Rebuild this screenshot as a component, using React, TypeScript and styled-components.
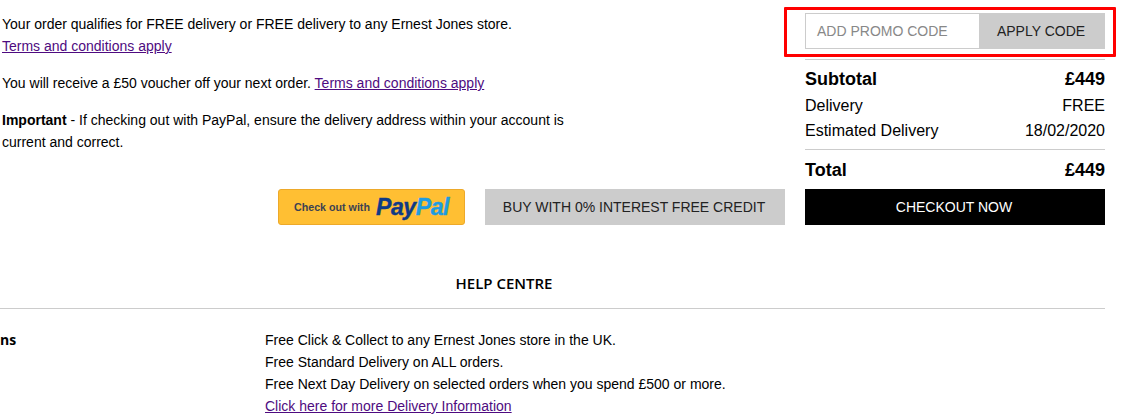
import React from 'react';
import styled, { createGlobalStyle } from 'styled-components';

const GlobalStyle = createGlobalStyle`
    html, body {
        margin: 0;
        padding: 0;
        background: #fff;
        overflow: hidden;
    }
    body {
        font-family: 'Liberation Sans', Arial, sans-serif;
        font-size: 14px;
        color: #000;
    }
`;

const Page = styled.div`
    width: 1105px;
    height: 414px;
`;

const Top = styled.div`
    display: flex;
    justify-content: space-between;
    padding-top: 13px;
`;

const Notes = styled.div`
    width: 580px;
    padding-left: 2px;
    line-height: 22px;
`;

const Note = styled.p`
    margin: 0 0 15px;
`;

const Terms = styled.a`
    color: #4e0b80;
    text-decoration: underline;
`;

const Summary = styled.div`
    position: relative;
    width: 300px;
`;

const Highlight = styled.div`
    position: absolute;
    left: -21px;
    top: -6px;
    width: 326px;
    height: 44px;
    border: 3px solid #f00;
    border-radius: 1px;
`;

const Promo = styled.div`
    display: flex;
    height: 36px;
`;

const PromoInput = styled.div`
    flex: 1;
    display: flex;
    align-items: center;
    padding-left: 11px;
    border: 1px solid #ccc;
    border-right: 0;
    color: #888;
`;

const PromoButton = styled.div`
    box-sizing: border-box;
    width: 126px;
    display: flex;
    align-items: center;
    justify-content: center;
    padding-right: 2px;
    background: #ccc;
    color: #222;
`;

const Totals = styled.div`
    margin-top: 10px;
    border-top: 1px solid #ccc;
    padding-top: 5px;
`;

const Row = styled.div<{ $bold?: boolean; $height: number }>`
    display: flex;
    justify-content: space-between;
    align-items: center;
    height: ${props => props.$height}px;
    font-size: ${props => (props.$bold ? 18 : 16)}px;
    font-weight: ${props => (props.$bold ? 700 : 400)};
`;

const TotalBlock = styled.div`
    margin-top: 6px;
    border-top: 1px solid #ccc;
    padding-top: 7px;
`;

const Actions = styled.div`
    display: flex;
    justify-content: flex-end;
    gap: 20px;
    margin-top: 6px;
`;

const PayPalButton = styled.div`
    box-sizing: border-box;
    width: 187px;
    height: 36px;
    display: flex;
    align-items: center;
    justify-content: center;
    gap: 6px;
    background: #ffbf33;
    border: 1px solid #eda92a;
    border-radius: 3px;
`;

const PayPalLabel = styled.span`
    font-size: 10.7px;
    font-weight: 700;
    color: #3d4252;
`;

const PayPalLogo = styled.span`
    font-size: 23px;
    line-height: 24px;
    font-weight: 700;
    font-style: italic;
    letter-spacing: -0.4px;
    color: #0f3a85;
    -webkit-text-stroke: 0.4px currentColor;
`;

const PayPalLight = styled.span`
    color: #1f9ce0;
`;

const ActionButton = styled.div<{ $dark?: boolean; $width: number }>`
    box-sizing: border-box;
    width: ${props => props.$width}px;
    height: 36px;
    display: flex;
    align-items: center;
    justify-content: center;
    padding-right: 2px;
    background: ${props => (props.$dark ? '#000' : '#ccc')};
    color: ${props => (props.$dark ? '#fff' : '#222')};
`;

const HelpTitle = styled.h2`
    margin: 47px 0 0;
    padding: 0 97px 13px 0;
    border-bottom: 1px solid #ccc;
    font-family: 'Open Sans', sans-serif;
    font-size: 15px;
    line-height: 23px;
    font-weight: 600;
    text-align: center;
`;

const HelpRow = styled.div`
    display: grid;
    grid-template-columns: 265px 1fr;
    margin-top: 20px;
    line-height: 22px;
`;

const HelpLabel = styled.div`
    font-family: 'Open Sans', sans-serif;
    font-weight: 700;
    font-size: 14px;
`;

const HelpLine = styled.div`
    height: 22px;
`;

const App = () => {
    return (
        <Page>
            <GlobalStyle />
            <Top>
                <Notes>
                    <Note>
                        Your order qualifies for FREE delivery or FREE delivery to any Ernest Jones store.
                        <br />
                        <Terms>Terms and conditions apply</Terms>
                    </Note>
                    <Note>
                        You will receive a £50 voucher off your next order. <Terms>Terms and conditions apply</Terms>
                    </Note>
                    <Note>
                        <b>Important</b> - If checking out with PayPal, ensure the delivery address within your account is
                        current and correct.
                    </Note>
                </Notes>
                <Summary>
                    <Highlight />
                    <Promo>
                        <PromoInput>ADD PROMO CODE</PromoInput>
                        <PromoButton>APPLY CODE</PromoButton>
                    </Promo>
                    <Totals>
                        <Row $bold $height={28}>
                            <span>Subtotal</span>
                            <span>£449</span>
                        </Row>
                        <Row $height={25}>
                            <span>Delivery</span>
                            <span>FREE</span>
                        </Row>
                        <Row $height={25}>
                            <span>Estimated Delivery</span>
                            <span>18/02/2020</span>
                        </Row>
                    </Totals>
                    <TotalBlock>
                        <Row $bold $height={26}>
                            <span>Total</span>
                            <span>£449</span>
                        </Row>
                    </TotalBlock>
                </Summary>
            </Top>
            <Actions>
                <PayPalButton>
                    <PayPalLabel>Check out with</PayPalLabel>
                    <PayPalLogo>
                        Pay<PayPalLight>Pal</PayPalLight>
                    </PayPalLogo>
                </PayPalButton>
                <ActionButton $width={300}>BUY WITH 0% INTEREST FREE CREDIT</ActionButton>
                <ActionButton $dark $width={300}>
                    CHECKOUT NOW
                </ActionButton>
            </Actions>
            <HelpTitle>HELP CENTRE</HelpTitle>
            <HelpRow>
                <HelpLabel>ns</HelpLabel>
                <div>
                    <HelpLine>Free Click &amp; Collect to any Ernest Jones store in the UK.</HelpLine>
                    <HelpLine>Free Standard Delivery on ALL orders.</HelpLine>
                    <HelpLine>Free Next Day Delivery on selected orders when you spend £500 or more.</HelpLine>
                    <HelpLine>
                        <Terms>Click here for more Delivery Information</Terms>
                    </HelpLine>
                </div>
            </HelpRow>
        </Page>
    );
};

export default App;
